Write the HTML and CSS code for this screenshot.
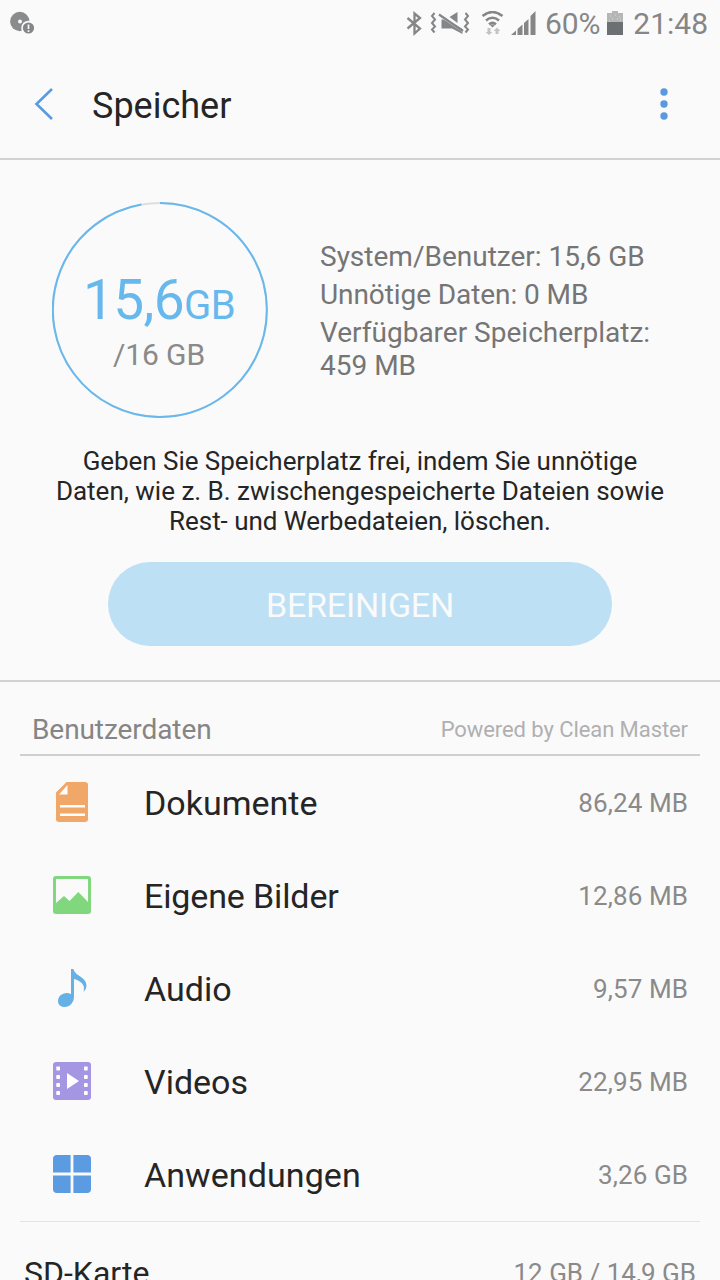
FILE: index.html
```html
<!DOCTYPE html>
<html lang="de">
<head>
<meta charset="utf-8">
<title>Speicher</title>
<link rel="stylesheet" href="styles.css">
</head>
<body>
<div class="screen">
  <div class="status">
    <svg class="status-disc" width="26" height="26" viewBox="0 0 26 26"><circle cx="9.800" cy="10.500" r="9.700" fill="#8a8b8c"/><circle cx="10" cy="10.500" r="2" fill="#fafafa"/><circle cx="18.500" cy="17" r="7.300" fill="#fafafa"/><circle cx="18.500" cy="17" r="5.600" fill="#858687"/><path d="M18.500 13.500v4.500M18.500 19.300v1.700" stroke="#fafafa" stroke-width="1.700"/></svg>
    <svg class="status-icons" width="140" height="26" viewBox="0 0 140 26">
      <g fill="none" stroke="#858687" stroke-width="2.300">
        <path d="M2.500 7L15 17.500L9.500 22.500V2.500L15 7L2.500 17.500"/>
        <path d="M29.500 2l-2.500 3L30 8.500 27 12 30 15.500 27 18.500 29.500 21.500M60.500 2l2.500 3L60 8.500 63 12 60 15.500 63 18.500 60.500 21.500" stroke-width="2"/>
        <path d="M77.500 5Q87.500 -3 97.500 5M81 9.500Q87.500 4 94 9.500M84 13.300Q87.500 10.500 91 13.300" stroke-width="2.500"/>
      </g>
      <path d="M36.500 8.500h5l16 9.500v5L47 17.500H36.500zM44.500 6L52.500 1v11z" fill="#858687"/>
      <path d="M35.500 5.500L58.500 21" stroke="#fafafa" stroke-width="1.500"/>
      <path d="M34 3.500L58 20" stroke="#858687" stroke-width="2.200"/>
      <path d="M84.500 13.500h6l-3 3z" fill="#858687"/>
      <path d="M82.500 17h3v4h2l-3.500 3-3.500-3h2zM90.500 23h3v-3h2l-3.500-3.500-3.500 3.500h2z" fill="#c4c4c4"/>
      <path d="M106 24l5-4.500V24zM112.500 24v-6l5-4.500V24zM119 24V12l4.500-4v16zM125.500 24V5l5-5v24z" fill="#858687"/>
    </svg>
    <span class="battery-text">60%</span>
    <svg class="battery" width="16" height="24" viewBox="0 0 16 24"><path d="M0 2h5V0h6v2h5v9H0z" fill="#b5b6b6"/><path d="M0 11h16v13H0z" fill="#6d7072"/><path d="M3 5h1M8 4h1M12 6h1M5 8h1M10 8h1M2 10h1M13 9h1" stroke="#dadada"/></svg>
    <span class="clock">21:48</span>
  </div>
  <header class="bar">
    <svg class="back" width="22" height="34" viewBox="0 0 22 34"><path d="M19 2L3.500 17L19 32" fill="none" stroke="#5a9ae2" stroke-width="2.600"/></svg>
    <h1 class="title">Speicher</h1>
    <svg class="more" width="8" height="32" viewBox="0 0 8 32" fill="#5b99de"><circle cx="4" cy="4" r="3.700"/><circle cx="4" cy="16" r="3.700"/><circle cx="4" cy="28" r="3.700"/></svg>
  </header>
  <section class="summary">
    <div class="overview">
      <div class="gauge">
        <svg class="ring" width="216" height="216" viewBox="0 0 216 216" fill="none" stroke-width="2"><circle cx="108" cy="108" r="107" stroke="#dedede"/><path d="M108 1A107 107 0 1 1 89.400 2.600" stroke="#67b8ec"/></svg>
        <div class="used"><span class="num">15,6</span><span class="unit">GB</span></div>
        <div class="total">/16 GB</div>
      </div>
      <div class="facts">
        <p class="fact">System/Benutzer: 15,6 GB</p>
        <p class="fact tight">Unnötige Daten: 0 MB</p>
        <p class="fact">Verfügbarer Speicherplatz:<br>459 MB</p>
      </div>
    </div>
    <p class="hint"><span class="tight">Geben Sie Speicherplatz frei, indem Sie unnötige</span><br>Daten, wie z. B. zwischengespeicherte Dateien sowie<br><span class="tight">Rest- und Werbedateien, löschen.</span></p>
    <button class="clean">BEREINIGEN</button>
  </section>
  <section class="data">
    <div class="data-head"><span class="data-title">Benutzerdaten</span><span class="powered">Powered by Clean Master</span></div>
    <div class="row">
      <svg class="icon" width="40" height="40" viewBox="0 0 40 40"><path d="M14.500 0H33Q36 0 36 3V37Q36 40 33 40H7Q4 40 4 37V10.500z" fill="#f0a767"/><path d="M15.500 3v9.500H7zM8 23h25v2.500H8zM8 31.500h25V34H8z" fill="#fff"/></svg>
      <span class="label">Dokumente</span><span class="size">86,24 MB</span>
    </div>
    <div class="row">
      <svg class="icon" width="40" height="40" viewBox="0 0 40 40"><rect x="1" y="1" width="38" height="38" rx="3" fill="#80d77d"/><path d="M4 4h32v23L26.300 17 17.500 26 12 21 4 28z" fill="#fafafa"/></svg>
      <span class="label tight">Eigene Bilder</span><span class="size">12,86 MB</span>
    </div>
    <div class="row">
      <svg class="icon" width="40" height="40" viewBox="0 0 40 40"><path d="M19 1h2.500C22.500 8 34.500 8.500 34.500 18q0 3-3 6c2-7-2-11-9.500-13v18c0 5-4 10-9.500 10-4 0-6.500-2.500-6.500-6 0-5.500 6.500-10 13-7z" fill="#65b1e5"/></svg>
      <span class="label">Audio</span><span class="size">9,57 MB</span>
    </div>
    <div class="row">
      <svg class="icon" width="40" height="40" viewBox="0 0 40 40"><rect x="1" y="1" width="38" height="38" rx="3" fill="#a596e3"/><path d="M15 12v16l12-8z" fill="#fff"/><g fill="#fff"><rect x="4.300" y="5.500" width="3.700" height="4" rx=".7"/><rect x="4.300" y="14" width="3.700" height="4" rx=".7"/><rect x="4.300" y="22" width="3.700" height="4" rx=".7"/><rect x="4.300" y="30" width="3.700" height="4" rx=".7"/><rect x="32" y="5.500" width="3.700" height="4" rx=".7"/><rect x="32" y="14" width="3.700" height="4" rx=".7"/><rect x="32" y="22" width="3.700" height="4" rx=".7"/><rect x="32" y="30" width="3.700" height="4" rx=".7"/></g></svg>
      <span class="label">Videos</span><span class="size">22,95 MB</span>
    </div>
    <div class="row">
      <svg class="icon" width="40" height="40" viewBox="0 0 40 40"><rect x="1" y="1" width="38" height="38" rx="4" fill="#5b9be2"/><path d="M20 1v38M1 20h38" stroke="#fafafa" stroke-width="2.800"/></svg>
      <span class="label wide">Anwendungen</span><span class="size">3,26 GB</span>
    </div>
  </section>
  <section class="sd"><span class="sd-label">SD-Karte</span><span class="sd-size">12 GB / 14,9 GB</span></section>
</div>
</body>
</html>
```
FILE: styles.css
```css
* { box-sizing: border-box; margin: 0; padding: 0; }
body { background: #fafafa; font-family: Roboto, "Liberation Sans", sans-serif; overflow: hidden; }
svg { display: block; flex: none; }
.screen { width: 720px; height: 1280px; overflow: hidden; display: flex; flex-direction: column; }
.screen > * { flex: none; }
.status { height: 50px; display: flex; align-items: flex-start; padding: 11px 12px 0 10px; font-size: 30px; line-height: 26px; color: #858687; white-space: nowrap; }
.status-icons { margin-left: 369px; }
.battery-text { width: 61px; letter-spacing: -0.1px; }
.battery { margin-left: 1px; }
.clock { margin-left: auto; }
.bar { height: 110px; border-bottom: 2px solid #d2d2d2; display: flex; align-items: center; padding: 0 52px 0 33px; }
.title { font-size: 36px; font-weight: 400; color: #252525; margin: 4px 0 0 37px; line-height: 42px; }
.more { margin-left: auto; }
.summary { height: 522px; border-bottom: 2px solid #d2d2d2; padding-top: 42px; }
.overview { display: flex; padding-left: 52px; height: 216px; }
.gauge { position: relative; width: 216px; height: 216px; padding-top: 65px; text-align: center; }
.ring { position: absolute; left: 0; top: 0; }
.used { color: #67b8ec; height: 70px; line-height: 66px; letter-spacing: -0.6px; padding-right: 2px; white-space: nowrap; }
.num { font-size: 55px; }
.unit { font-size: 40px; }
.total { font-size: 30px; line-height: 35px; color: #8a8a8a; padding-right: 2px; letter-spacing: -0.1px; }
.facts { margin-left: 52px; padding-top: 38px; font-size: 28px; line-height: 33px; color: #757575; white-space: nowrap; }
.fact { margin-bottom: 5px; }
.tight { letter-spacing: -0.05px; }
.fact.tight { letter-spacing: -0.08px; }
.label.tight { letter-spacing: -0.13px; }
.label.wide { letter-spacing: 0.08px; }
.hint { margin-top: 28px; text-align: center; font-size: 26px; line-height: 30px; color: #252525; white-space: nowrap; }
.clean { display: block; margin: 26px auto 0; width: 504px; height: 84px; padding-top: 1px; border: 0; border-radius: 42px; background: #bde0f5; color: #fafafa; font: 34px/84px Roboto, sans-serif; letter-spacing: -0.25px; }
.data { margin: 0 20px; border-bottom: 1px solid #e4e4e4; }
.data-head { height: 74px; border-bottom: 2px solid #cfcfcf; padding: 24px 12px 0; display: flex; justify-content: space-between; }
.data-title { font-size: 28px; line-height: 48px; color: #858585; letter-spacing: -0.08px; }
.powered { font-size: 22px; line-height: 48px; color: #b0b0b0; letter-spacing: -0.08px; }
.row { height: 93px; display: flex; align-items: center; padding: 0 12px 0 32px; }
.icon { margin-bottom: 2px; }
.label { margin-left: 52px; font-size: 34px; color: #252525; }
.size { margin-left: auto; font-size: 26px; color: #8a8a8a; letter-spacing: 0.1px; }
.sd { display: flex; justify-content: space-between; padding: 29px 24px 0; line-height: 44px; }
.sd-label { font-size: 32px; color: #252525; }
.sd-size { font-size: 26px; color: #8a8a8a; }
```
